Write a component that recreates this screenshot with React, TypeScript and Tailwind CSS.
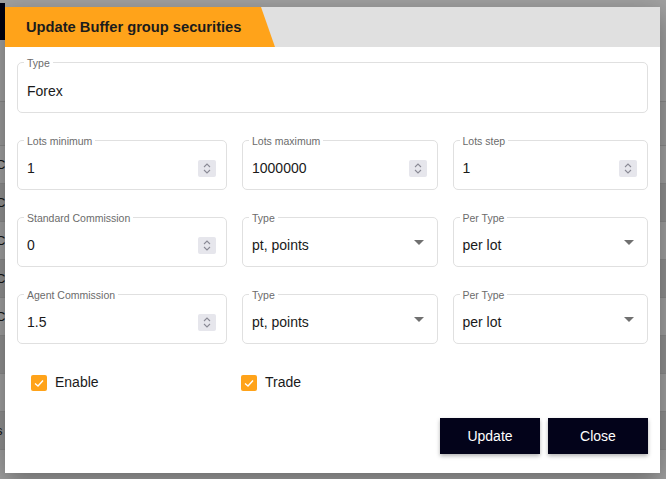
import { useState } from "react";

const font = { fontFamily: '"Liberation Sans", Arial, sans-serif' };

function SpinBox() {
  return (
    <div className="w-[18px] h-[17px] bg-[#e6e6ec] rounded-[2px] flex items-center justify-center shrink-0">
      <svg width="10" height="13" viewBox="0 0 10 13" fill="none" stroke="#8a8a95" strokeWidth="1.1">
        <polyline points="2,5 5,2 8,5" />
        <polyline points="2,8 5,11 8,8" />
      </svg>
    </div>
  );
}

function Arrow() {
  return (
    <svg width="10" height="5" viewBox="0 0 10 5" className="shrink-0 -translate-y-[3px]">
      <polygon points="0,0 10,0 5,5" fill="#707070" />
    </svg>
  );
}

function Field({
  label,
  value,
  kind,
  tall,
}: {
  label: string;
  value: string;
  kind?: "number" | "select";
  tall?: boolean;
}) {
  return (
    <div
      className={`relative border border-[#e0e0e0] rounded-[5px] flex items-center pl-[9px] pt-[7px] ${
        tall ? "h-[51px]" : "h-[50px]"
      } ${kind === "select" ? "pr-[13px]" : "pr-[10px]"}`}
    >
      <span className="absolute left-[6px] -top-[6px] px-[3px] bg-white text-[10.5px] leading-[12px] text-[#6b6b6b]">
        {label}
      </span>
      <span className="flex-1 text-[14px] text-[#1a1a1a]">{value}</span>
      {kind === "number" && <SpinBox />}
      {kind === "select" && <Arrow />}
    </div>
  );
}

function Check({ label, checked, onToggle }: { label: string; checked: boolean; onToggle: () => void }) {
  return (
    <label className="flex items-center gap-2 cursor-pointer" onClick={onToggle}>
      <span className="w-4 h-4 rounded-[2px] bg-[#ffa31a] flex items-center justify-center">
        {checked && (
          <svg width="12" height="12" viewBox="0 0 12 12" fill="none" stroke="#fff" strokeWidth="1.4">
            <polyline points="2,6.5 5,9 10,3.5" />
          </svg>
        )}
      </span>
      <span className="text-[14px] text-[#1a1a1a]">{label}</span>
    </label>
  );
}

const rows = ["C", "C", "C", "C", "C", "", "t", "s"];

export default function App() {
  const [enable, setEnable] = useState(true);
  const [trade, setTrade] = useState(true);

  return (
    <div className="relative w-[666px] h-[479px] overflow-hidden bg-white" style={font}>
      {/* page behind the dialog */}
      <div className="flex flex-col text-[14px] text-[#222]">
        <div className="h-[40px] flex items-start pt-[3px]">
          <div className="w-[5px] h-[37px] overflow-hidden bg-[#03031a]" />
        </div>
        <div className="h-[62px] border-b border-[#ddd]" />
        <div className="h-[44px] bg-[#f5f5f5] border-b border-[#ddd]" />
        {rows.map((r, i) => (
          <div
            key={i}
            className={`h-[38px] flex items-center border-b border-[#ddd] ${i % 2 ? "bg-[#e6e6e6]" : "bg-white"}`}
          >
            <span className="text-[13px] -ml-[4px]">{r}</span>
          </div>
        ))}
      </div>

      <div className="absolute inset-0 bg-black/[0.37] flex items-start justify-start pl-[5px] pt-[7px]">
        <div className="w-[655px] h-[466px] bg-white flex flex-col shadow-[0_8px_24px_rgba(0,0,0,0.35)]">
          <div className="h-10 bg-[#e0e0e0] shrink-0 flex">
            <div className="h-full w-[270px] bg-[#ffa31a] [clip-path:polygon(0_0,256px_0,100%_100%,0_100%)] flex items-center pl-[21px]">
              <span className="text-[14.7px] font-bold text-[#1c1c1c]">Update Buffer group securities</span>
            </div>
          </div>

          <div className="flex-1 flex flex-col px-3 pt-[15px] pb-[19px]">
            <Field label="Type" value="Forex" tall />

            <div className="grid grid-cols-[210px_1fr_1fr] gap-x-[15px] gap-y-[27px] mt-[27px]">
              <Field label="Lots minimum" value="1" kind="number" />
              <Field label="Lots maximum" value="1000000" kind="number" />
              <Field label="Lots step" value="1" kind="number" />
              <Field label="Standard Commission" value="0" kind="number" />
              <Field label="Type" value="pt, points" kind="select" />
              <Field label="Per Type" value="per lot" kind="select" />
              <Field label="Agent Commission" value="1.5" kind="number" />
              <Field label="Type" value="pt, points" kind="select" />
              <Field label="Per Type" value="per lot" kind="select" />
            </div>

            <div className="flex items-center mt-[28px] pl-[14px]">
              <div className="w-[210px]">
                <Check label="Enable" checked={enable} onToggle={() => setEnable(!enable)} />
              </div>
              <Check label="Trade" checked={trade} onToggle={() => setTrade(!trade)} />
            </div>

            <div className="mt-auto flex justify-end gap-2">
              <button className="w-[100px] h-9 bg-[#03031a] text-white text-[14px] shadow-[0_2px_4px_rgba(0,0,0,0.3)]">
                Update
              </button>
              <button className="w-[100px] h-9 bg-[#03031a] text-white text-[14px] shadow-[0_2px_4px_rgba(0,0,0,0.3)]">
                Close
              </button>
            </div>
          </div>
        </div>
      </div>
    </div>
  );
}
